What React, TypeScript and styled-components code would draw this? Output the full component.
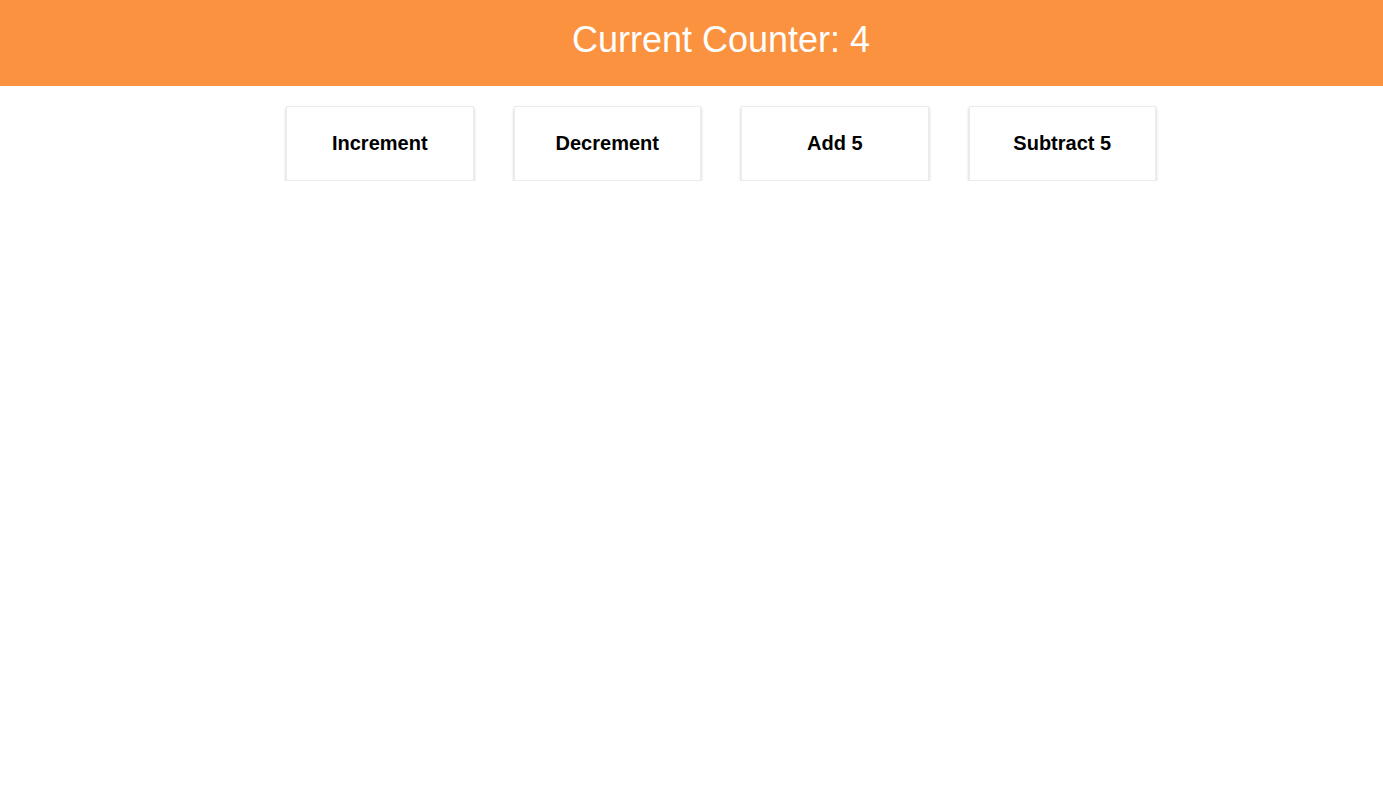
import React from "react";
import styled, { createGlobalStyle } from "styled-components";

const GlobalStyle = createGlobalStyle`
  html, body { margin: 0; padding: 0; background: #ffffff; }
  body { font-family: "Liberation Sans", Arial, sans-serif; }
`;

const Page = styled.div`
  padding-left: 59px;
`;

const Header = styled.header`
  box-sizing: border-box;
  height: 86px;
  margin-left: -59px;
  padding: 19px 0 0 59px;
  background: #fb923f;
  text-align: center;
`;

const Title = styled.h1`
  margin: 0;
  font-size: 36px;
  font-weight: 400;
  color: #ffffff;
  line-height: 41px;
`;

const ButtonRow = styled.div`
  display: flex;
  justify-content: center;
  gap: 40px;
  margin-top: 20px;
`;

const CounterButton = styled.button`
  box-sizing: border-box;
  width: 187.5px;
  height: 75px;
  background: #ffffff;
  border: 1px solid #ececec;
  border-radius: 0;
  box-shadow: 0 2px 3px rgba(0, 0, 0, 0.22);
  font-family: "Liberation Sans", Arial, sans-serif;
  font-size: 20px;
  font-weight: 700;
  color: #000000;
  cursor: pointer;
  padding: 0;
`;

const labels = ["Increment", "Decrement", "Add 5", "Subtract 5"];

export default function App() {
  return (
    <>
      <GlobalStyle />
      <Page>
        <Header>
          <Title>Current Counter: 4</Title>
        </Header>
        <ButtonRow>
          {labels.map((l) => (
            <CounterButton key={l}>{l}</CounterButton>
          ))}
        </ButtonRow>
      </Page>
    </>
  );
}
